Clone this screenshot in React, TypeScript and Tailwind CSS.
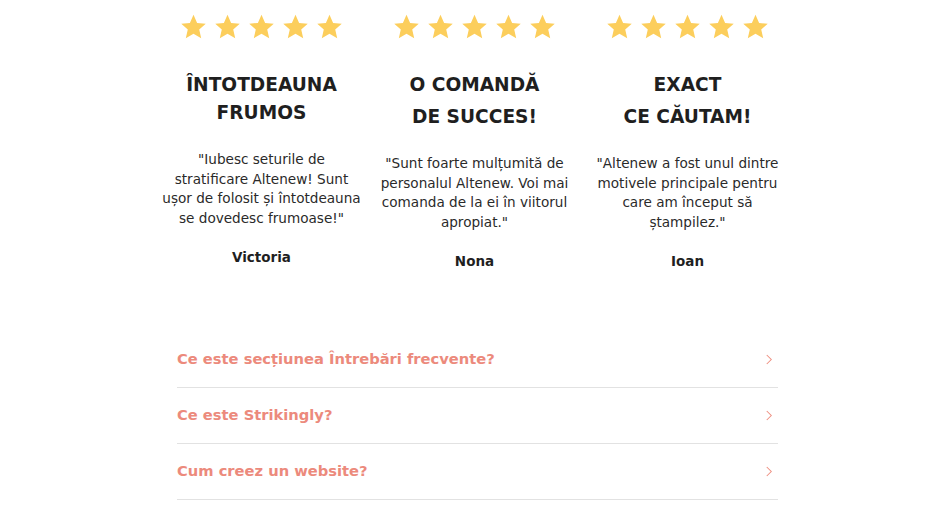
import React from "react";

const reviews = [
  {
    title: ["ÎNTOTDEAUNA", "FRUMOS"],
    head: "mt-[30px] leading-[28px]",
    gap: "mt-[23px]",
    quote: "\"Iubesc seturile de stratificare Altenew! Sunt ușor de folosit și întotdeauna se dovedesc frumoase!\"",
    name: "Victoria",
  },
  {
    title: ["O COMANDĂ", "DE SUCCES!"],
    head: "mt-[28px] leading-[32px]",
    gap: "mt-[21px]",
    quote: "\"Sunt foarte mulțumită de personalul Altenew. Voi mai comanda de la ei în viitorul apropiat.\"",
    name: "Nona",
  },
  {
    title: ["EXACT", "CE CĂUTAM!"],
    head: "mt-[28px] leading-[32px]",
    gap: "mt-[21px]",
    quote: "\"Altenew a fost unul dintre motivele principale pentru care am început să ștampilez.\"",
    name: "Ioan",
  },
];

const faqs = ["Ce este secțiunea Întrebări frecvente?", "Ce este Strikingly?", "Cum creez un website?"];

function Star() {
  return (
    <svg viewBox="0 0 24 24" className="w-[29px] h-[28px]">
      <path
        fill="#fcce5c"
        d="M12 1.6l3.1 6.9 7.4.7-5.6 5 1.7 7.4L12 17.8l-6.6 3.8 1.7-7.4-5.6-5 7.4-.7z"
      />
    </svg>
  );
}

export default function App() {
  return (
    <div className="w-[941px] h-[505px] overflow-hidden bg-white font-['DejaVu_Sans',sans-serif] text-[#1f1f1f]">
      <div className="flex justify-center pl-[8px] pt-[13px]">
        {reviews.map((r) => (
          <div key={r.name} className="w-[213px] flex flex-col items-center text-center">
            <div className="flex gap-[5px]">
              {[0, 1, 2, 3, 4].map((i) => (
                <Star key={i} />
              ))}
            </div>
            <h2 className={`text-[18.6px] font-bold ${r.head}`}>
              {r.title[0]}
              <br />
              {r.title[1]}
            </h2>
            <p className={`${r.gap} w-[200px] text-[13.6px] leading-[19.6px] text-[#2a2a2a]`}>{r.quote}</p>
            <div className="mt-[19px] text-[13.5px] font-bold">{r.name}</div>
          </div>
        ))}
      </div>
      <div className="w-[601px] ml-[177px] mt-[60px]">
        {faqs.map((q) => (
          <div key={q} className="h-[56px] flex items-center justify-between border-b border-[#e2e2e2]">
            <span className="text-[14.7px] font-bold text-[#ec8a7c]">{q}</span>
            <svg viewBox="0 0 8 14" className="w-[6px] h-[11px] mr-[6px]">
              <path d="M1 1l6 6-6 6" fill="none" stroke="#ee8f80" strokeWidth="1.4" />
            </svg>
          </div>
        ))}
      </div>
    </div>
  );
}
